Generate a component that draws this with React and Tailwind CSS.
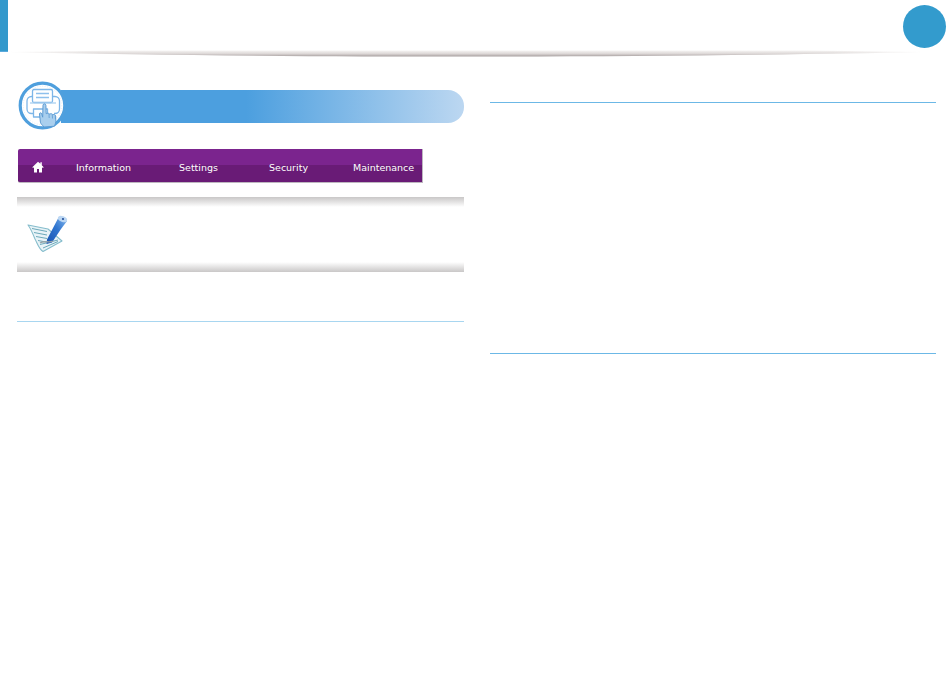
import React from "react";

function PrinterBadge() {
  return (
    <svg width="50" height="50" viewBox="0 0 50 50" className="shrink-0 relative z-10">
      <circle cx="24.5" cy="24.5" r="22.3" fill="#fff" stroke="#4f9fdd" strokeWidth="3.2" />
      <circle cx="24.5" cy="24.5" r="19.3" fill="none" stroke="#cfe3f5" strokeWidth="0.6" strokeDasharray="1 1.5" />
      <g fill="none" stroke="#7db6e8" strokeWidth="1.3" strokeLinejoin="round">
        <rect x="14.5" y="8.5" width="20" height="13" rx="1.5" fill="#fff" />
        <path d="M18 12.500h13M18 16.500h13" stroke="#8ec0ec" />
        <path d="M14.500 15.500h-1a4.500 4.500 0 0 0-4.500 4.500v8a4.500 4.500 0 0 0 4.500 4.500h2.500M34.500 15.500h2.500a4.500 4.500 0 0 1 4.500 4.500v8a4.500 4.500 0 0 1-4.500 4.500h-1" />
        <path d="M12 22h26" stroke="#a9d0f0" />
        <path d="M15.500 28h14v8h-14z" fill="#fff" />
      </g>
      <path
        d="M26 46c-1.500-2-3-2.600-3.600-4.800l-.9-8.200c-.1-1.400 1.900-1.600 2.200-.2l1 3.400.3-12c.1-1.800 2.800-1.800 2.900 0l.3 8.500c1.600-.8 2.900-.4 3.400.3 1.400-.6 2.700-.2 3.200.6 1.300-.4 2.800.2 2.900 1.700l.1 5c0 2.100-1 3.500-1.400 4.900z"
        fill="#a9cfee"
        stroke="#5d9bd3"
        strokeWidth="1"
        strokeLinejoin="round"
      />
      <path d="M31 33l.2 4M34.300 33.500l.2 4M37.300 34.500l.1 3.500" stroke="#5d9bd3" strokeWidth="0.8" fill="none" />
    </svg>
  );
}

function NoteIcon() {
  return (
    <svg width="44" height="42" viewBox="0 0 44 42">
      <defs>
        <linearGradient id="pen" x1="0" y1="1" x2="1" y2="0">
          <stop offset="0" stopColor="#1a54b0" />
          <stop offset="0.55" stopColor="#2f74cf" />
          <stop offset="1" stopColor="#7cb2ea" />
        </linearGradient>
        <filter id="soft" x="-10%" y="-10%" width="120%" height="120%">
          <feGaussianBlur stdDeviation="0.35" />
        </filter>
      </defs>
      <g filter="url(#soft)">
        <path d="M3 13L23 17 37 29 18 39.500C14 37 13 33 10 27 8 22 6 17 3 13z" fill="#e8f3f7" stroke="#86bdcc" strokeWidth="1.1" strokeLinejoin="round" />
        <path d="M7 16.500l15 3M9 20.500l13 2.500M11 24.500l11 2M13 28.500l8 1.500M15 32.500l18-4.500M18 36l15-6.500" stroke="#6ca9ba" strokeWidth="1" fill="none" />
        <path d="M22 27.500L33 6.500 42 9 36 17 27 30.500 21.500 32z" fill="url(#pen)" />
        <ellipse cx="37.500" cy="7" rx="4.800" ry="2.800" transform="rotate(20 37.500 7)" fill="#bcd7f3" />
        <circle cx="38" cy="7" r="1.100" fill="#244f98" />
        <path d="M15 31c3-2 5-1.200 7-1.200s3 .4 6-.6" stroke="#96a4a9" strokeWidth="1.400" fill="none" />
      </g>
    </svg>
  );
}

function NavBar() {
  const items = [
    ["Information", "w-[58px] ml-[32px]"],
    ["Settings", "w-[40px] ml-[45px]"],
    ["Security", "w-[40px] ml-[50px]"],
    ["Maintenance", "w-[60px] ml-[44px]"],
  ];
  return (
    <div className="relative w-[405px] h-[34px] rounded-l-[2px] bg-[linear-gradient(#7b248e_0,#7b248e_50%,#691b76_50%,#691b76_100%)] border-b border-r border-[#bdb7bf] flex items-center pl-[14px] text-white text-[9.5px] font-['DejaVu_Sans',Verdana,sans-serif]">
      <svg width="12" height="12" viewBox="0 0 12 12" className="shrink-0 mt-[2px]">
        <path d="M6 .8L.3 6.200l.8.8L2 6.200V11.500h3V8h2v3.500h3V6.200l.9.800.8-.8L9.800 4.200V1.200H8.400v1.600z" fill="#fff" />
      </svg>
      {items.map(([label, cls]) => (
        <span key={label} className={`${cls} whitespace-nowrap pt-[5px]`}>
          {label}
        </span>
      ))}
    </div>
  );
}

export default function App() {
  return (
    <div className="w-[950px] h-[674px] bg-white overflow-hidden font-['Liberation_Sans',Arial,sans-serif]">
      <header className="relative h-[57px] flex items-start justify-between">
        <div className="w-[8px] h-[52px] bg-[#3399cc] border-b border-[#5aa9dc]" />
        <div className="w-[43px] h-[43px] mt-[5px] mr-[4px] rounded-full bg-[#339bcd]" />
        <svg className="absolute left-[8px] top-[49px]" width="915" height="8" viewBox="0 0 915 8" preserveAspectRatio="none">
          <defs>
            <linearGradient id="rule" x1="0" y1="0" x2="0" y2="1">
              <stop offset="0" stopColor="#f6f4f3" />
              <stop offset="0.55" stopColor="#dcd7d6" />
              <stop offset="1" stopColor="#a69e9e" />
            </linearGradient>
            <linearGradient id="fade" x1="0" y1="0" x2="1" y2="0">
              <stop offset="0" stopColor="#fff" stopOpacity="0.2" />
              <stop offset="0.1" stopColor="#fff" stopOpacity="1" />
              <stop offset="0.9" stopColor="#fff" stopOpacity="1" />
              <stop offset="1" stopColor="#fff" stopOpacity="0.2" />
            </linearGradient>
            <mask id="ruleMask">
              <rect width="915" height="8" fill="url(#fade)" />
            </mask>
          </defs>
          <path d="M0 3L120 1.500H800L915 3C780 6 600 7.500 457 7.500 320 7.500 150 6.500 0 3z" fill="url(#rule)" mask="url(#ruleMask)" />
        </svg>
      </header>

      <main className="flex pl-[17px] gap-[26px]">
        <section className="w-[447px] shrink-0">
          <div className="flex items-center h-[50px] mt-[24px] pl-[1px]">
            <PrinterBadge />
            <div className="h-[33px] w-[403px] ml-[-7px] rounded-r-[16px] bg-[linear-gradient(90deg,#4c9fdf_0,#4c9fdf_46%,#bcd7f1_100%)]" />
          </div>
          <div className="mt-[18px] pl-[1px]">
            <NavBar />
          </div>
          <div className="mt-[14px] h-[75px] flex flex-col justify-between relative">
            <div className="h-[10px] bg-[linear-gradient(#c9c7c7,#ffffff)]" />
            <div className="flex-1 pl-[8px] pt-[5px]">
              <NoteIcon />
            </div>
            <div className="h-[10px] bg-[linear-gradient(#ffffff,#c9c7c7)]" />
          </div>
          <div className="mt-[49px] border-t border-[#a8d6f0]" />
        </section>
        <section className="w-[446px] shrink-0">
          <div className="mt-[45px] border-t border-[#6cb8e6]" />
          <div className="mt-[250px] border-t border-[#6cb8e6]" />
        </section>
      </main>
    </div>
  );
}
